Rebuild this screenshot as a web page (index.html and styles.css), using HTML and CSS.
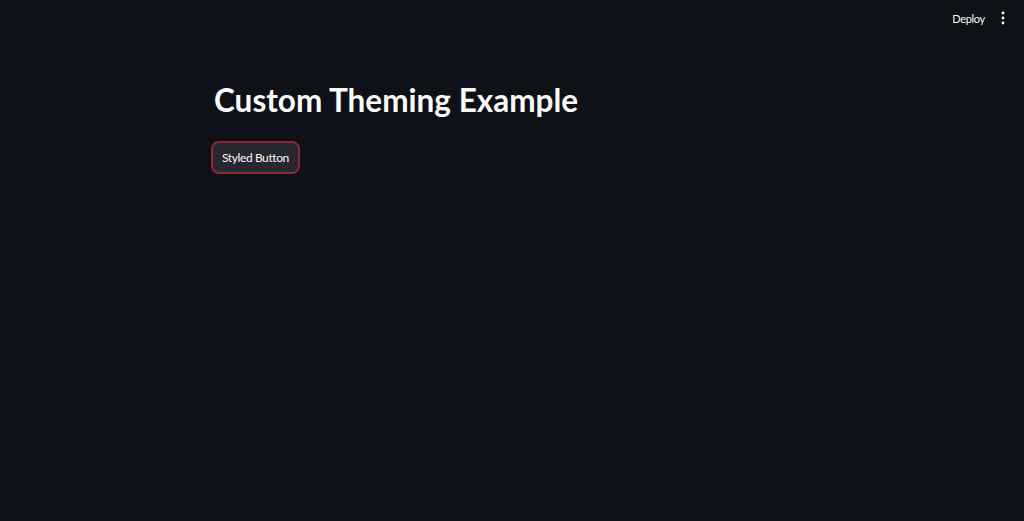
FILE: index.html
```html
<!DOCTYPE html>
<html lang="en">
<head>
  <meta charset="UTF-8">
  <meta name="viewport" content="width=device-width, initial-scale=1.0">
  <title>Custom Theming Example</title>
  <link rel="stylesheet" href="styles.css">
</head>
<body>
  <header class="top-bar">
    <button class="deploy">Deploy</button>
    <button class="menu" aria-label="Main menu">
      <svg width="4" height="14" viewBox="0 0 4 14">
        <circle cx="2" cy="2" r="1.4" fill="#fafafa"/>
        <circle cx="2" cy="7" r="1.4" fill="#fafafa"/>
        <circle cx="2" cy="12" r="1.4" fill="#fafafa"/>
      </svg>
    </button>
  </header>

  <main class="block-container">
    <h1>Custom Theming Example</h1>
    <button class="styled-btn">Styled Button</button>
  </main>
</body>
</html>
```

FILE: styles.css
```css
body {
  margin: 0;
  height: 100vh;
  background: #0e1117;
  color: #fafafa;
  font-family: Lato, "Noto Sans", sans-serif;
}

.top-bar {
  display: flex;
  justify-content: flex-end;
  align-items: center;
  height: 36px;
  padding-right: 19px;
  gap: 16px;
}

.deploy {
  background: none;
  border: none;
  color: #fafafa;
  font-family: inherit;
  font-size: 11px;
  letter-spacing: -0.3px;
  padding: 0;
}

.menu {
  background: none;
  border: none;
  padding: 0;
  display: flex;
  align-items: center;
}

.block-container {
  padding: 44px 0 0 214px;
}

h1 {
  margin: 0 0 21px;
  font-size: 31.5px;
  font-weight: 700;
  line-height: 40px;
}

.styled-btn {
  background: #262730;
  color: #fafafa;
  border: 2px solid #8a2a32;
  border-radius: 8px;
  font-family: inherit;
  font-size: 12px;
  letter-spacing: -0.4px;
  height: 33px;
  padding: 0 9px;
  margin-left: -3px;
}
```
